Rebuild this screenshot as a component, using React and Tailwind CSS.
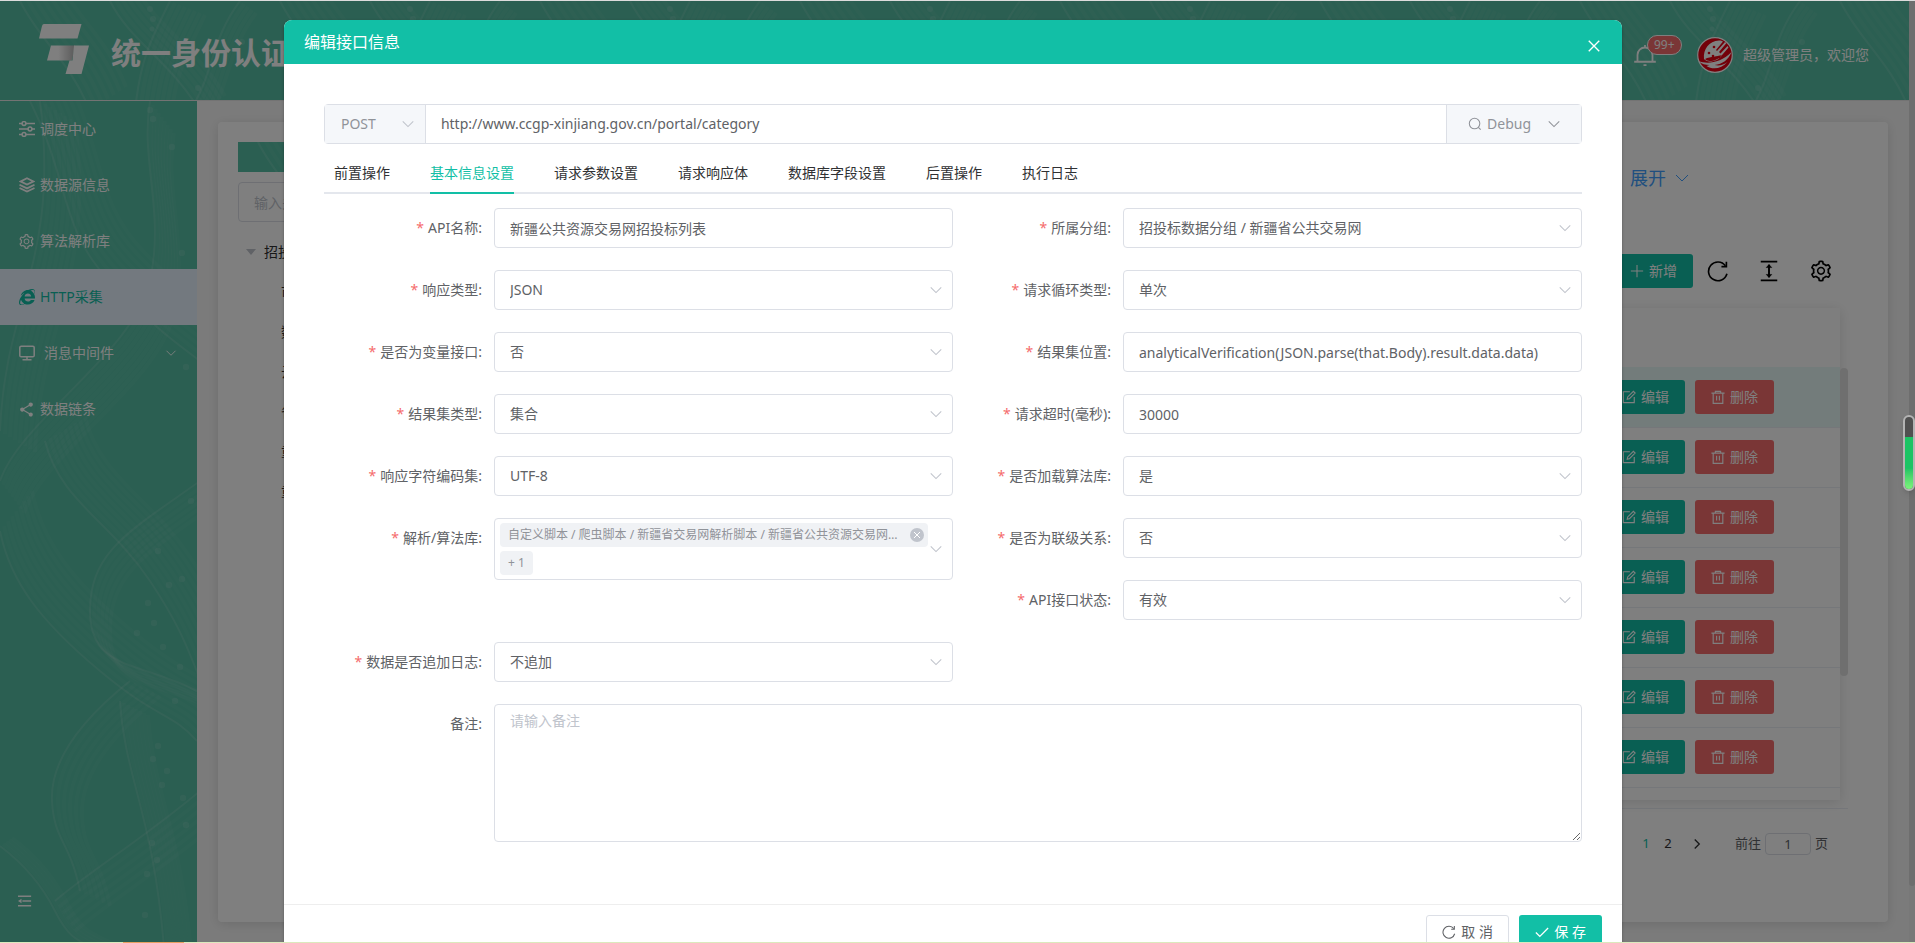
import React from 'react';
import { AiOutlineSetting } from 'react-icons/ai';
import { FaInternetExplorer } from 'react-icons/fa';
import { MdShare } from 'react-icons/md';

const MENU = [
    { icon: 'sliders', text: '调度中心' },
    { icon: 'layers', text: '数据源信息' },
    { icon: 'gear', text: '算法解析库' },
    { icon: 'ie', text: 'HTTP采集', active: true },
    { icon: 'monitor', text: '消息中间件', children: true },
    { icon: 'share', text: '数据链条' },
];

const TREE = ['市级分类采集', '数据采集接口', '云南公告接口', '省级采购公告', '重庆公共资源', '重点工程项目'];

const TABS = ['前置操作', '基本信息设置', '请求参数设置', '请求响应体', '数据库字段设置', '后置操作', '执行日志'];

const ROWS = [1, 2, 3, 4, 5, 6, 7];

const Icon = ({ size = 14, width = 1.2, className = '', children }) => (
    <svg
        width={size}
        height={size}
        viewBox="0 0 16 16"
        fill="none"
        stroke="currentColor"
        strokeWidth={width}
        className={`shrink-0 ${className}`}
        aria-hidden="true"
    >
        {children}
    </svg>
);

const ChevronDown = (props) => <Icon {...props}><path d="M2 5l6 6 6-6" /></Icon>;
const Plus = () => <Icon><path d="M8 1v14M1 8h14" /></Icon>;
const Close = (props) => <Icon {...props}><path d="M2 2l12 12M14 2L2 14" /></Icon>;
const Check = () => <Icon width={1.5}><path d="M1 8.5l4.5 4.5L15 3.5" /></Icon>;
const Refresh = (props) => (
    <Icon {...props}>
        <path d="M13.4 4.2A6.8 6.8 0 1 0 14.5 10" />
        <path d="M14.1 1.2v3.6h-3.6" />
    </Icon>
);
const Search = () => <Icon><circle cx="7.5" cy="7.5" r="6" /><path d="M11.8 11.8l2.7 2.7" /></Icon>;
const Edit = () => (
    <Icon width={1.3}>
        <path d="M9 2H1.5v12.5H14V8" />
        <path d="M6 10.5l.5-2.6L13 1.5l2 2-6.5 6.4z" />
    </Icon>
);
const Trash = () => (
    <Icon width={1.3}>
        <path d="M.5 3.5h15M5 3.5v-2h6v2M2.5 3.5v11.8h11V3.5M6.4 6.5v5.5M9.6 6.5v5.5" />
    </Icon>
);
const RowHeight = () => (
    <Icon size={22} width={1.4}>
        <path d="M2 1.2h12M2 14.8h12M8 3.5v9" />
        <path d="M6 5.5l2-2.2 2 2.2zM6 10.5l2 2.2 2-2.2z" fill="currentColor" strokeWidth="0.4" />
    </Icon>
);
const Bell = () => (
    <Icon size={24}>
        <path d="M.8 12.5h14.4M3 12.5V8a5 5 0 0 1 10 0v4.5M8 3V1.4M7 14.8h2" />
    </Icon>
);

const MenuIcon = ({ name }) => {
    switch (name) {
        case 'sliders':
            return (
                <Icon size={16} width={1.5}>
                    <path d="M0 2.5h3M7 2.5h9M0 8h9M13 8h3M0 13.5h3M7 13.5h9" />
                    <circle cx="5" cy="2.5" r="1.9" />
                    <circle cx="11" cy="8" r="1.9" />
                    <circle cx="5" cy="13.5" r="1.9" />
                </Icon>
            );
        case 'layers':
            return (
                <Icon size={16} width={1.8}>
                    <path d="M8 1.2L14.5 4.4 8 7.6 1.5 4.4z" />
                    <path d="M.5 7.8L8 11.4l7.5-3.6M.5 11L8 14.6l7.5-3.6" />
                </Icon>
            );
        case 'gear':
            return <AiOutlineSetting size={17} />;
        case 'ie':
            return <FaInternetExplorer size={16} />;
        case 'monitor':
            return (
                <Icon size={16} width={1.5}>
                    <rect x="0.8" y="1.2" width="14.4" height="10.6" rx="1.4" />
                    <path d="M8 12v2.4M3.5 14.7h9" />
                </Icon>
            );
        default:
            return <MdShare size={17} />;
    }
};

// each band is one curve repeated with a growing offset, which gives the woven look
const BANDS = [
    { d: 'M0 330 C5 200 60 160 40 0', n: 8, dx: 5, dy: 3 },
    { d: 'M30 0 C70 80 60 130 110 180 S160 230 200 260', n: 8, dx: 5, dy: -4 },
    { d: 'M150 0 C140 60 165 110 150 180 S20 320 0 380', n: 9, dx: 3, dy: 4 },
    { d: 'M0 430 C10 480 40 520 100 570 S170 610 197 640', n: 9, dx: 4, dy: -5 },
    { d: 'M45 340 C60 400 110 420 150 480 S190 560 210 600', n: 9, dx: 5, dy: -3 },
    { d: 'M200 380 C130 430 90 450 90 510 S140 560 197 590', n: 6, dx: 4, dy: 4 },
    { d: 'M130 580 C80 620 50 660 52 700 S70 740 80 790', n: 6, dx: 6, dy: 3 },
    { d: 'M120 600 C125 680 155 715 165 860', n: 8, dx: 4, dy: 2 },
    { d: 'M0 745 C20 760 40 780 55 810 S80 840 100 850', n: 5, dx: 3, dy: -2 },
    { d: 'M55 800 C90 770 140 740 200 690', n: 6, dx: 4, dy: 6 },
];

const DOTS = [
    [150, 9], [153, 18], [172, 46], [182, 152], [186, 266], [191, 400], [158, 450], [182, 478],
    [169, 484], [148, 502], [154, 522], [137, 532], [163, 546], [180, 566], [175, 600], [158, 645],
    [153, 658], [167, 670], [162, 684], [183, 697], [186, 724], [152, 742], [157, 759], [147, 773], [145, 814],
];

const Weave = ({ bands }) => (
    <g fill="none" stroke="#fff">
        {bands.map((band) =>
            Array.from({ length: band.n }, (_, i) => (
                <path
                    key={`${band.d}${i}`}
                    d={band.d}
                    transform={`translate(${i * band.dx} ${i * band.dy})`}
                    strokeOpacity={i === 0 ? 0.1 : 0.035}
                    strokeWidth={i === 0 ? 2 : 4}
                />
            ))
        )}
    </g>
);

const SidebarArt = () => (
    <svg
        className="absolute inset-0 h-full w-full"
        viewBox="0 0 197 842"
        preserveAspectRatio="xMinYMin slice"
        aria-hidden="true"
    >
        <Weave bands={BANDS} />
        <g fill="#fff" fillOpacity="0.1">
            {DOTS.map(([x, y]) => <circle key={`${x}-${y}`} cx={x} cy={y} r="3.2" />)}
        </g>
    </svg>
);

const HEADER_BANDS = [
    { d: 'M20 0 C40 40 70 60 90 110', n: 7, dx: 6, dy: -4 },
    { d: 'M170 0 C150 40 140 60 135 110', n: 8, dx: 5, dy: 2 },
    { d: 'M110 0 C130 40 170 60 200 110', n: 6, dx: 5, dy: -3 },
    { d: 'M240 0 C210 40 215 70 190 110', n: 5, dx: 4, dy: 3 },
];

const HeaderArt = () => (
    <svg className="absolute inset-0 h-full w-full" aria-hidden="true">
        <defs>
            <pattern id="headerWeave" width="260" height="100" patternUnits="userSpaceOnUse">
                <Weave bands={HEADER_BANDS} />
                <g fill="#fff" fillOpacity="0.1">
                    <circle cx="150" cy="8" r="3" />
                    <circle cx="153" cy="18" r="3" />
                    <circle cx="152" cy="28" r="2.5" />
                    <circle cx="198" cy="87" r="3" />
                    <circle cx="242" cy="41" r="3" />
                </g>
            </pattern>
        </defs>
        <rect width="100%" height="100%" fill="url(#headerWeave)" />
    </svg>
);

const Logo = () => (
    <svg width="50" height="50" viewBox="0 0 50 50" aria-hidden="true">
        <defs>
            <linearGradient id="fold" x1="0" x2="1">
                <stop offset="0.4" stopColor="#fff" />
                <stop offset="1" stopColor="#b5b5b5" />
            </linearGradient>
        </defs>
        <path d="M5 0h37.500l-4 14.500H0L3 2q.5-2 2-2z" fill="#fff" />
        <path d="M12 21.500h24l-3 15H8z" fill="url(#fold)" />
        <path d="M35 21.500h15L42.500 50H26.500l4-13.500h3z" fill="#fff" />
    </svg>
);

const Avatar = () => (
    <svg width="36" height="36" viewBox="0 0 36 36" aria-hidden="true">
        <circle cx="18" cy="18" r="17.300" fill="#e60012" stroke="#fff" strokeWidth="1.200" />
        <path d="M7 22C6 12 12 4 22 3.500c2 0 3 .5 4 1L19 13l1 1 8-9 1.500 1L22 15l1.500 1.500 7-7.500 1 1.500-6 7c-3 5-8 7-13 7-2.500 0-4-1-5.500-2.500z" fill="#fff" />
        <path d="M1.500 24c9 3.500 22 2 33-9-3 8-9 12-17 13 5 1 9 0 13-3-6 7-15 8-21 4l3-1c-4 0-8-1-11-4z" fill="#fff" />
        <g fill="#e60012">
            <circle cx="12" cy="16" r="1.300" />
            <circle cx="17" cy="10" r="1.300" />
            <circle cx="16" cy="19" r="1.300" />
            <circle cx="22" cy="20" r="1.300" />
            <path d="M8 22c6-3 12-2 17-4-3 4-8 6-12 6-2 0-4-1-5-2z" />
        </g>
    </svg>
);

const Header = () => (
    <header className="relative flex h-[100px] shrink-0 items-center justify-between border-b border-[#e6e6e6] bg-[#56bea4] pr-10 pl-[39px] text-white">
        <HeaderArt />
        <div className="relative flex items-center gap-[22px] pb-1">
            <Logo />
            <h1 className="pt-2 text-[30px] leading-10 font-bold">统一身份认证平台</h1>
        </div>
        <div className="relative flex items-center pt-2">
            <button type="button" aria-label="消息通知" className="relative mr-10">
                <Bell />
                <span className="absolute -top-2 left-[14px] flex h-5 items-center rounded-full border border-white bg-[#f56c6c] px-1.5 text-xs">
                    99+
                </span>
            </button>
            <Avatar />
            <span className="ml-2.5 text-sm">超级管理员，欢迎您</span>
        </div>
    </header>
);

const Sidebar = () => (
    <nav className="relative flex w-[197px] shrink-0 flex-col bg-[#56bea4] text-sm text-white">
        <SidebarArt />
        {MENU.map((item) => (
            <a
                key={item.text}
                href="#"
                className={
                    item.active
                        ? 'relative flex h-14 items-center bg-[#e6f2ff] pr-5 pl-[18px] text-[#12bfa6]'
                        : 'relative flex h-14 items-center pr-5 pl-[18px]'
                }
            >
                <span className="flex w-[17px] justify-center"><MenuIcon name={item.icon} /></span>
                <span className={item.children ? 'ml-[9px] flex-1' : 'ml-[5px] flex-1'}>{item.text}</span>
                {item.children && <ChevronDown size={12} />}
            </a>
        ))}
        <button type="button" aria-label="收起菜单" className="relative mt-auto mb-[34px] ml-[18px] w-4">
            <Icon size={14} width={1.8}>
                <path d="M0 2.500h15M5 8h10M0 13.500h15" />
                <path d="M0 8l4-2.500v5z" fill="currentColor" stroke="none" />
            </Icon>
        </button>
    </nav>
);

const TreePanel = () => (
    <aside className="w-[260px] shrink-0 text-sm text-[#606266]">
        <div className="relative h-[30px] overflow-hidden bg-[#56bea4]"><HeaderArt /></div>
        <input
            aria-label="关键字"
            placeholder="输入关键字进行过滤"
            className="mt-2.5 h-10 w-full rounded border border-[#dcdfe6] px-[15px] placeholder:text-[#c0c4cc]"
        />
        <ul className="mt-2.5">
            <li className="flex h-10 items-center pl-2 text-[#303133]">
                <svg width="10" height="6" viewBox="0 0 10 6" className="mr-2 shrink-0" aria-hidden="true">
                    <path d="M0 0h10L5 6z" fill="#c0c4cc" />
                </svg>
                招投标数据分组
            </li>
            {TREE.map((name) => (
                <li key={name} className="flex h-10 items-center pl-[43px] text-[#303133]">{name}</li>
            ))}
        </ul>
    </aside>
);

const TaskTable = () => (
    <div className="flex border-b border-[#ebeef5] pb-2">
        <div className="flex-1 shadow-[0_2px_12px_rgba(0,0,0,0.12)]">
            <table className="w-full">
                <thead>
                    <tr className="h-[59px] bg-[#fcfcfc]"><th aria-label="操作" /></tr>
                </thead>
                <tbody>
                    {ROWS.map((row) => (
                        <tr
                            key={row}
                            className={row === 1 ? 'h-[60px] border-b border-[#ebeef5] bg-[#e7f8f6]' : 'h-[60px] border-b border-[#ebeef5]'}
                        >
                            <td className="pr-[66px]">
                                <div className="flex justify-end gap-2.5 text-sm text-white">
                                    <button type="button" className="flex h-[34px] items-center gap-[5px] rounded-[3px] bg-[#12bfa6] px-4">
                                        <Edit />编辑
                                    </button>
                                    <button type="button" className="flex h-[34px] items-center gap-[5px] rounded-[3px] bg-[#f56c6c] px-4">
                                        <Trash />删除
                                    </button>
                                </div>
                            </td>
                        </tr>
                    ))}
                </tbody>
            </table>
            <div className="h-3" />
        </div>
        <div className="w-2 pt-[60px]">
            <div className="h-[308px] rounded bg-[#dedede]" />
        </div>
    </div>
);

const Content = () => (
    <main className="flex flex-1 bg-[#f7f7f7] p-5 pt-[21px] pr-[21px] pl-[21px]">
        <div className="flex flex-1 gap-5 rounded bg-white p-5 pr-10 shadow-[0_2px_12px_rgba(0,0,0,0.12)]">
            <TreePanel />
            <section className="flex flex-1 flex-col text-[#303133]">
                <div className="flex h-[72px] items-center justify-end pr-[158px]">
                    <a href="#" className="flex items-center gap-2 text-lg text-[#409eff]">
                        展开 <ChevronDown size={16} width={1} />
                    </a>
                </div>
                <div className="mt-10 mb-5 flex h-[34px] items-center justify-end gap-[29px] pr-[15px] text-black">
                    <div className="flex items-center gap-[14px]">
                        <button type="button" className="flex h-[34px] items-center gap-[5px] rounded-[3px] bg-[#12bfa6] px-4 text-sm text-white">
                            <Plus />新增
                        </button>
                        <button type="button" aria-label="刷新"><Refresh size={22} /></button>
                    </div>
                    <button type="button" aria-label="行高"><RowHeight /></button>
                    <button type="button" aria-label="列设置"><AiOutlineSetting size={24} /></button>
                </div>
                <TaskTable />
                <div className="mt-6 flex h-[22px] items-center justify-end pr-5 text-[13px]">
                    <button type="button" className="w-[22px] text-[#12bfa6]">1</button>
                    <button type="button" className="w-[22px]">2</button>
                    <button type="button" aria-label="下一页" className="mx-3 flex w-3 justify-center">
                        <Icon size={12} width={1.8}><path d="M5 2l6 6-6 6" /></Icon>
                    </button>
                    <label className="ml-5 flex items-center gap-1 text-[#606266]">
                        前往
                        <input defaultValue="1" className="h-[22px] w-[46px] rounded border border-[#dcdfe6] text-center" />
                        页
                    </label>
                </div>
            </section>
        </div>
    </main>
);

const Field = ({ id, label, required = true, className = '', children }) => (
    <div className={`flex items-start text-sm ${className}`}>
        <label htmlFor={id} className="w-[170px] shrink-0 pr-3 text-right leading-10 text-[#606266]">
            {required && <span className="mr-1 text-[#f56c6c]">*</span>}
            {label}:
        </label>
        <div className="relative min-w-0 flex-1">{children}</div>
    </div>
);

const TextField = ({ id, label, value }) => (
    <Field id={id} label={label}>
        <input
            id={id}
            defaultValue={value}
            className="block h-10 w-full rounded border border-[#dcdfe6] px-[15px] text-[#606266] outline-none"
        />
    </Field>
);

const SelectField = ({ id, label, value }) => (
    <Field id={id} label={label}>
        <select
            id={id}
            className="block h-10 w-full appearance-none rounded border border-[#dcdfe6] bg-white px-[15px] text-[#606266] outline-none"
        >
            <option>{value}</option>
        </select>
        <ChevronDown className="pointer-events-none absolute top-[13px] right-[10px] text-[#c0c4cc]" />
    </Field>
);

const TagField = ({ id, label }) => (
    <Field id={id} label={label} className="row-span-2">
        <div
            id={id}
            className="flex h-[62px] flex-col items-start justify-center gap-1 rounded border border-[#dcdfe6] pr-6 pl-[5px] text-xs text-[#909399]"
        >
            <span className="flex h-6 max-w-full items-center rounded bg-[#f0f2f5] pr-1 pl-2">
                <span className="truncate">自定义脚本 / 爬虫脚本 / 新疆省交易网解析脚本 / 新疆省公共资源交易网解析脚本</span>
                <button
                    type="button"
                    aria-label="移除"
                    className="ml-1.5 flex h-[14px] w-[14px] shrink-0 items-center justify-center rounded-full bg-[#c0c4cc] text-white"
                >
                    <Close size={8} width={2} />
                </button>
            </span>
            <span className="flex h-6 items-center rounded bg-[#f0f2f5] px-2">+ 1</span>
        </div>
        <ChevronDown className="pointer-events-none absolute top-6 right-[10px] text-[#c0c4cc]" />
    </Field>
);

const UrlBar = () => (
    <div className="flex h-10 rounded border border-[#dcdfe6] text-sm">
        <div className="relative w-[101px] shrink-0 border-r border-[#dcdfe6] bg-[#f5f7fa]">
            <select aria-label="请求方式" className="h-full w-full appearance-none px-4 text-[#909399] outline-none">
                <option>POST</option>
            </select>
            <ChevronDown className="pointer-events-none absolute top-3 right-[10px] text-[#c0c4cc]" />
        </div>
        <input
            aria-label="接口地址"
            defaultValue="http://www.ccgp-xinjiang.gov.cn/portal/category"
            className="min-w-0 flex-1 px-[15px] text-[#606266] outline-none"
        />
        <button
            type="button"
            className="flex w-[135px] shrink-0 items-center border-l border-[#dcdfe6] bg-[#f5f7fa] pl-[21px] text-[#909399]"
        >
            <Search />
            <span className="mr-4 ml-[5px]">Debug</span>
            <ChevronDown />
        </button>
    </div>
);

const Dialog = () => (
    <div role="dialog" aria-label="编辑接口信息" className="w-[calc(70%+4px)] shrink-0 rounded-t-lg bg-white shadow-[0_1px_3px_rgba(0,0,0,0.3)]">
        <div className="flex h-11 items-center justify-between rounded-t-lg bg-[#12bfa6] px-5 text-white">
            <h2 className="text-base">编辑接口信息</h2>
            <button type="button" aria-label="关闭" className="flex h-9 w-4 items-center justify-center self-end">
                <Close size={14} width={1.6} />
            </button>
        </div>
        <div className="px-10 pt-10 pb-[62px]">
            <UrlBar />
            <div role="tablist" className="mt-2.5 mb-[14px] flex gap-10 border-b-2 border-[#e4e7ed] pl-2.5 text-sm text-[#303133]">
                {TABS.map((tab) => (
                    <button
                        key={tab}
                        type="button"
                        role="tab"
                        className={
                            tab === '基本信息设置'
                                ? '-mb-0.5 h-10 border-b-2 border-[#12bfa6] text-[#12bfa6]'
                                : '-mb-0.5 h-10 border-b-2 border-transparent'
                        }
                    >
                        {tab}
                    </button>
                ))}
            </div>
            <form className="grid grid-cols-2 gap-y-[22px]">
                <TextField id="apiName" label="API名称" value="新疆公共资源交易网招投标列表" />
                <SelectField id="group" label="所属分组" value="招投标数据分组 / 新疆省公共交易网" />
                <SelectField id="responseType" label="响应类型" value="JSON" />
                <SelectField id="loopType" label="请求循环类型" value="单次" />
                <SelectField id="isVariable" label="是否为变量接口" value="否" />
                <TextField id="resultPath" label="结果集位置" value="analyticalVerification(JSON.parse(that.Body).result.data.data)" />
                <SelectField id="resultType" label="结果集类型" value="集合" />
                <TextField id="timeout" label="请求超时(毫秒)" value="30000" />
                <SelectField id="charset" label="响应字符编码集" value="UTF-8" />
                <SelectField id="loadAlgorithm" label="是否加载算法库" value="是" />
                <TagField id="algorithms" label="解析/算法库" />
                <SelectField id="cascade" label="是否为联级关系" value="否" />
                <SelectField id="status" label="API接口状态" value="有效" />
                <SelectField id="appendLog" label="数据是否追加日志" value="不追加" />
                <Field id="remark" label="备注" required={false} className="col-span-2">
                    <textarea
                        id="remark"
                        placeholder="请输入备注"
                        className="block h-[138px] w-full resize rounded border border-[#dcdfe6] px-[15px] py-1.5 text-[#606266] outline-none placeholder:text-[#c0c4cc]"
                    />
                </Field>
            </form>
        </div>
        <div className="flex justify-end gap-2.5 border-t border-[#eeeeee] px-5 py-2.5 text-sm">
            <button type="button" className="flex h-[34px] w-[83px] items-center justify-center gap-[5px] rounded-[3px] border border-[#dcdfe6] text-[#606266]">
                <Refresh /> 取 消
            </button>
            <button type="button" className="flex h-[34px] w-[83px] items-center justify-center gap-[5px] rounded-[3px] bg-[#12bfa6] text-white">
                <Check /> 保 存
            </button>
        </div>
    </div>
);

const App = () => (
    <div className="relative flex h-screen flex-col overflow-hidden border-t border-[#dcdcdc] font-['Noto_Sans','Noto_Sans_CJK_SC',sans-serif]">
        <div className="flex min-h-0 flex-1">
            <div className="flex flex-1 flex-col">
                <Header />
                <div className="flex flex-1">
                    <Sidebar />
                    <Content />
                </div>
            </div>
            <div className="w-1.5 shrink-0 bg-[#f0f0f0]">
                <div className="h-[94%] rounded-b bg-[#dcdcdc]" />
            </div>
        </div>

        <div className="absolute inset-0 flex items-start justify-center overflow-hidden bg-black/50 pt-[19px] pr-[9px]">
            <Dialog />
        </div>

        <div className="absolute top-[414px] right-0 h-[76px] w-3 rounded-full border-2 border-[#b4b4b4] bg-[#505050] shadow-md">
            <div className="mt-5 h-[52px] rounded-b-full bg-linear-to-b from-[#1bc464] from-60% to-[#7cf57c]" />
        </div>

        <div className="relative flex h-px shrink-0 bg-[#dbe9bd]">
            <div className="ml-[123px] w-[61px] bg-[#e8a060]" />
        </div>
    </div>
);

export default App;
